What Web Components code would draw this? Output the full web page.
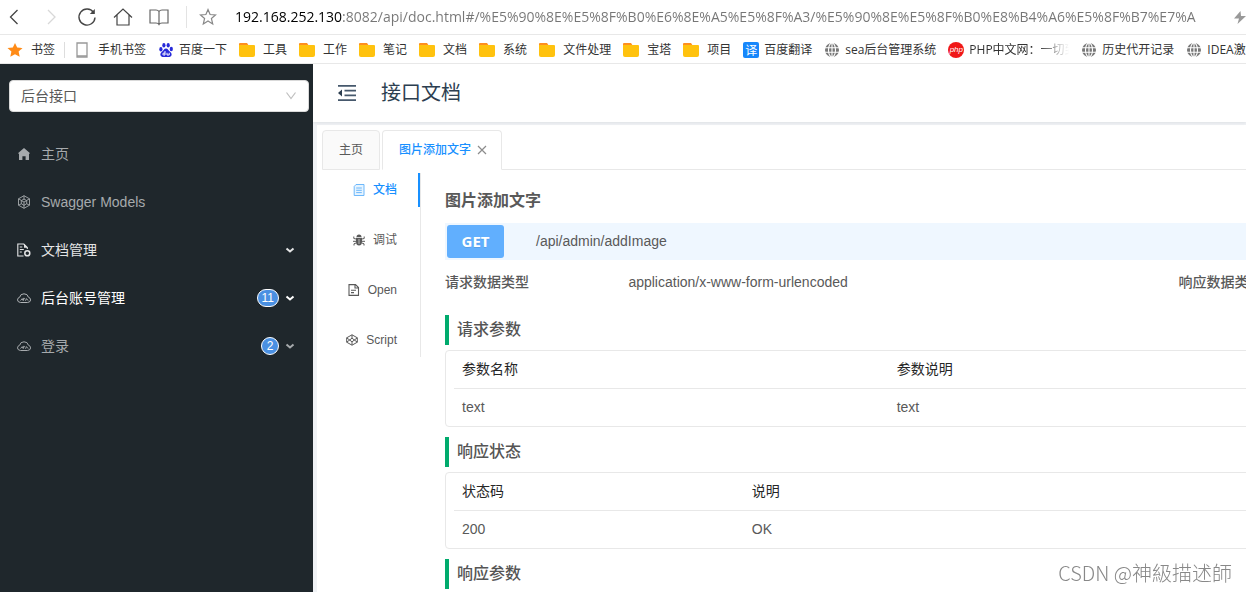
<!DOCTYPE html>
<html lang="zh-CN">
<head>
<meta charset="utf-8">
<title>接口文档</title>
<style>
  body {
    margin: 0;
    font: 14px/22px "Liberation Sans", "Noto Sans CJK SC", sans-serif;
    color: #595959;
    background: #fff;
  }
</style>
</head>
<body>
<api-app></api-app>

<script>
const ICONS = {
  back: ['0 0 20 20', '<path d="M12.500 3 5.500 10l7 7" fill="none" stroke="#444" stroke-width="1.300"/>'],
  forward: ['0 0 20 20', '<path d="m7 3 7 7-7 7" fill="none" stroke="#d8d8d8" stroke-width="1.300"/>'],
  reload: ['0 0 20 20', '<path d="M16.600 5.500A8 8 0 1 0 18 10.500" fill="none" stroke="#444" stroke-width="1.400"/><path d="M17.800 2v5h-5z" fill="#444"/>'],
  house: ['0 0 20 20', '<path d="M1 10.500 10 2l9 8.500M4 8v10h12V8" fill="none" stroke="#444" stroke-width="1.200"/>'],
  book: ['0 0 20 20', '<path d="M10 4.500C9 3 8 3 7 3H1v13h6c1.500 0 2.500.5 3 1.500.5-1 1.500-1.500 3-1.500h6V3h-6c-1 0-2 0-3 1.500zv13" fill="none" stroke="#666" stroke-width="1.200"/>'],
  fav: ['0 0 20 20', '<path d="m10 2.500 2.100 5 5.400.5-4.100 3.500 1.300 5.400L10 14l-4.700 2.900 1.300-5.400L2.500 8l5.400-.5z" fill="none" stroke="#888" stroke-width="1.200"/>'],
  bolt: ['0 0 16 16', '<path d="M8.500 2 2 9.500h5L5.500 15 14 7H9z" fill="#999"/>'],
  star: ['0 0 16 16', '<path d="m8 1 2.200 4.500 5.300.6-3.900 3.500 1.100 5.100L8 12.200l-4.700 2.500 1.100-5.100L.5 6.100l5.300-.6z" fill="#ff8b17"/>'],
  phone: ['0 0 16 16', '<path d="M3 1h10v14H3z" fill="#fff" stroke="#999" stroke-width="1.300"/><path d="M3 14h10" stroke="#999" stroke-width="1.500"/>'],
  baidu: ['0 0 16 16', '<g fill="#2629d9"><ellipse cx="2.900" cy="7.200" rx="1.600" ry="2.200"/><ellipse cx="5.900" cy="3.300" rx="1.600" ry="2.300"/><ellipse cx="10.200" cy="3.300" rx="1.600" ry="2.300"/><ellipse cx="13.300" cy="7" rx="1.600" ry="2.200"/><path d="M8 6.500c2 0 2.500 2 4 3.300 1.700 1.500 2 2.700 1.300 4-.8 1.500-2.800 1.300-5.300 1.100-2.500.2-4.500.4-5.300-1.100-.7-1.300-.4-2.500 1.300-4C5.500 8.500 6 6.500 8 6.500z"/></g><path d="M7 9v4H5.300q-1-.9 0-1.900H7M9 10.800V13h2.200v-2.200" fill="none" stroke="#fff"/>'],
  folder: ['0 0 16 16', '<path d="M0 2q0-1 1-1h7l2 3v3H0z" fill="#ff8f1f"/><path d="M0 3h15q1 0 1 1v9q0 2-2 2H2q-2 0-2-2z" fill="#ffc20e"/>'],
  globe: ['0 0 16 16', '<circle cx="8" cy="8" r="7" fill="#777"/><g fill="none" stroke="#fff" stroke-width="1.100"><ellipse cx="8" cy="8" rx="3.500" ry="7"/><path d="M8 1v14M1 5.700h14M1 10.300h14"/></g>'],
  home: ['0 0 14 14', '<path d="M7 1 12.800 6q.3.800-.6.800H12V13H8.600V9.300H5.400V13H2V6.800h-.2Q.9 6.800 1.200 6z" fill="currentColor"/>'],
  model: ['0 0 14 14', '<g fill="none" stroke="currentColor" stroke-width=".9"><path d="M7 .7 12.500 3.800v6.400L7 13.300 1.500 10.200V3.800zM7 .7v3.800M1.500 3.800 4.500 5.500M12.500 3.800 9.500 5.500M7 13.300V10M1.500 10.200l3-1.500M12.500 10.200l-3-1.500"/><path d="m7 4 2.700 1.600v3.100L7 10.300 4.300 8.700V5.600zM4.300 5.600 7 7l2.700-1.400M7 7v3.300"/></g>'],
  docset: ['0 0 14 14', '<path d="M6.500 13H.8V1h6l3.500 3.500V6M2.800 4h2.500M2.800 6.500h4M2.800 9h2" fill="none" stroke="currentColor" stroke-width="1.100"/><path d="M7 1v3.700h3.500z" fill="currentColor"/><circle cx="10.300" cy="10.300" r="2.500" fill="none" stroke="currentColor" stroke-width="1.500"/>'],
  cloud: ['0 0 14 14', '<path d="M3.500 11.500Q.5 11.100.5 8.900q0-2 2.200-2.700Q3.300 2.800 7 2.800q3.700 0 4.400 3.400 2.200.7 2.200 2.700 0 2.200-3 2.600z" fill="none" stroke="currentColor"/><path d="m3.500 9.600 1.700-2 .8 2M6.500 9.600V7.300q1.700-.2 1.300 1M8.500 9.800l1-2.200 1.600 2" fill="none" stroke="currentColor" stroke-width=".9"/>'],
  chevron: ['0 0 10 10', '<path d="m1.500 3.500 3.500 3 3.500-3" fill="none" stroke="currentColor" stroke-width="2"/>'],
  arrow: ['0 0 12 12', '<path d="m1.500 2.500 4.500 6 4.500-6" fill="none" stroke="#bfbfbf" stroke-width="1.200"/>'],
  fold: ['0 0 20 20', '<path d="M1 2.800h18M7.500 7.700H19M7.500 12.300H19M1 17.200h18" stroke="#46586c" stroke-width="1.700"/><path d="M5 6.500v7L1 10z" fill="#2c3e50"/>'],
  close: ['0 0 10 10', '<path d="m1 1 8 8M9 1 1 9" fill="none" stroke="#8c8c8c" stroke-width="1.200"/>'],
  file: ['0 0 12 12', '<path d="M3 .5h8v11H1.200V2.500zM3.200 4h5.600M3.200 6.300h5.600M3.200 8.600h5.600" fill="#e6f4ff" stroke="#5fb0fb" stroke-width=".9"/>'],
  bug: ['0 0 12 12', '<path d="M3.500 3q0-2.500 2.500-2.500T8.500 3zM3 3.700h6v4q0 3.800-3 3.800t-3-3.800z" fill="currentColor"/><path d="M.8 2.500v2L3 5M11.200 2.500v2L9 5M0 7.300h12M1 11.500V9.800L3 9M11 11.500V9.800L9 9" fill="none" stroke="currentColor"/><path d="M6 5v5" stroke="#fff" stroke-width=".6"/>'],
  page: ['0 0 12 12', '<path d="M1 .6h6.500l3 3v7.800H1zM7 .6V4h3.500M3 6.300h5M3 8.600h3" fill="none" stroke="currentColor" stroke-width="1.100"/>'],
  pen: ['0 0 12 12', '<path d="m6 .8 5.300 3v4.400l-5.300 3-5.300-3V3.800zM6 .8v3.400M6 7.800v3.400M.7 3.800 6 7.800l5.300-4M.7 8.200 6 4.200l5.300 4" fill="none" stroke="currentColor"/>']
};

const define = (name, markup, setup) => {
  const template = document.createElement('template');
  template.innerHTML = markup;
  customElements.define(name, class extends HTMLElement {
    constructor() {
      super();
      this.attachShadow({ mode: 'open' }).append(template.content.cloneNode(true));
    }
    connectedCallback() {
      if (setup) setup(this, this.shadowRoot);
    }
  });
};

const makeIcon = (name, className = '') => {
  const icon = document.createElement('ui-icon');
  icon.setAttribute('name', name);
  icon.className = className;
  return icon;
};

/* A square icon; its side is set by --size. */
define('ui-icon', `
  <style>
    :host { display: block; flex: none; width: var(--size, 16px); height: var(--size, 16px); }
    svg { display: block; width: 100%; height: 100%; }
  </style>
  <svg aria-hidden="true"></svg>`, (el, root) => {
  const [box, body] = ICONS[el.getAttribute('name')];
  const svg = root.querySelector('svg');
  svg.setAttribute('viewBox', box);
  svg.innerHTML = body;
});

define('address-bar', `
  <style>
    :host { display: flex; align-items: center; height: 34px; padding-left: 5px; border-bottom: 1px solid #e8e8e8; overflow: hidden; }
    button { flex: none; padding: 0; margin-right: 16px; border: 0; background: none; --size: 20px; }
    .rule { flex: none; width: 1px; height: 22px; margin: 0 11px 0 1px; background: #e3e3e3; }
    .fav { margin-right: 17px; }
    input {
      flex: 1; min-width: 0; padding: 0; border: 0; outline: 0; height: 24px;
      font: 14px/24px "Open Sans", sans-serif;
      color: transparent;
      background: linear-gradient(90deg, #000 107px, #767676 107px);
      -webkit-background-clip: text; background-clip: text;
    }
    .go { margin: 0 0 0 16px; --size: 16px; width: 14px; overflow: hidden; }
  </style>
  <button aria-label="后退"><ui-icon name="back"></ui-icon></button>
  <button aria-label="前进"><ui-icon name="forward"></ui-icon></button>
  <button aria-label="刷新"><ui-icon name="reload"></ui-icon></button>
  <button aria-label="首页"><ui-icon name="house"></ui-icon></button>
  <button aria-label="阅读"><ui-icon name="book"></ui-icon></button>
  <span class="rule"></span>
  <button class="fav" aria-label="收藏"><ui-icon name="fav"></ui-icon></button>
  <input aria-label="地址" value="192.168.252.130:8082/api/doc.html#/%E5%90%8E%E5%8F%B0%E6%8E%A5%E5%8F%A3/%E5%90%8E%E5%8F%B0%E8%B4%A6%E5%8F%B7%E7%A">
  <button class="go" aria-label="加速"><ui-icon name="bolt"></ui-icon></button>`);

define('book-mark', `
  <style>
    :host { display: block; flex: none; margin-right: 12px; }
    a { display: flex; align-items: center; gap: 5px; color: #333; text-decoration: none; white-space: nowrap; }
    :host([icon="folder"]) a, :host([icon="star"]) a, :host([icon="phone"]) a { gap: 8px; }
    :host([fade]) span { width: 100px; overflow: hidden; -webkit-mask: linear-gradient(90deg, #000 70px, transparent); mask: linear-gradient(90deg, #000 70px, transparent); }
    b { width: 16px; height: 16px; text-align: center; font: 12px/16px "Noto Sans CJK SC", sans-serif; color: #fff; background: #1787fb; border-radius: 2px; }
    b.php { border-radius: 8px; background: #f01818; font: italic 8px/16px "Liberation Sans", sans-serif; }
  </style>
  <a href="#"><span><slot></slot></span></a>`, (el, root) => {
  const name = el.getAttribute('icon');
  const badge = { fanyi: '译', php: 'php' }[name];
  let mark = null;
  if (badge) {
    mark = document.createElement('b');
    mark.textContent = badge;
    mark.className = name;
  } else {
    mark = makeIcon(name);
  }
  root.querySelector('a').prepend(mark);
});

define('bookmark-bar', `
  <style>
    :host { display: flex; align-items: center; height: 27px; padding: 1px 0 0 7px; border-bottom: 1px solid #e8e8e8; overflow: hidden;
            font: 12px/20px "Open Sans", "Noto Sans CJK SC", sans-serif; }
    i { flex: none; width: 1px; height: 16px; margin: 0 9px 0 -3px; background: #ddd; }
  </style>
  <book-mark icon="star">书签</book-mark><i></i>
  <book-mark icon="phone">手机书签</book-mark>
  <book-mark icon="baidu">百度一下</book-mark>
  <book-mark icon="folder">工具</book-mark>
  <book-mark icon="folder">工作</book-mark>
  <book-mark icon="folder">笔记</book-mark>
  <book-mark icon="folder">文档</book-mark>
  <book-mark icon="folder">系统</book-mark>
  <book-mark icon="folder">文件处理</book-mark>
  <book-mark icon="folder">宝塔</book-mark>
  <book-mark icon="folder">项目</book-mark>
  <book-mark icon="fanyi">百度翻译</book-mark>
  <book-mark icon="globe">sea后台管理系统</book-mark>
  <book-mark icon="php" fade>PHP中文网：一切到</book-mark>
  <book-mark icon="globe">历史代开记录</book-mark>
  <book-mark icon="globe">IDEA激</book-mark>`);

define('menu-item', `
  <style>
    :host { display: block; color: #a6aaad; }
    :host([tone="light"]) { color: #e4e5e6; }
    :host([tone="active"]) { color: #fff; }
    a { display: flex; align-items: center; height: 48px; padding: 0 18px 0 17px; color: inherit; text-decoration: none; }
    .icon { --size: 14px; margin-right: 10px; }
    :host([tone="active"]) .icon { color: #b0b4b7; }
    .text { flex: 1; }
    .count { min-width: 8px; padding: 0 4px; border: 1px solid #fff; border-radius: 9px; margin-right: 6px;
             background: #4a90e2; color: #fff; font-size: 12px; line-height: 16px; text-align: center; }
    .open { --size: 10px; }
  </style>
  <a href="#"><span class="text"><slot></slot></span></a>`, (el, root) => {
  const link = root.querySelector('a');
  link.prepend(makeIcon(el.getAttribute('icon'), 'icon'));
  if (el.hasAttribute('count')) {
    const count = document.createElement('span');
    count.className = 'count';
    count.textContent = el.getAttribute('count');
    link.append(count);
  }
  if (el.hasAttribute('group')) link.append(makeIcon('chevron', 'open'));
});

define('side-bar', `
  <style>
    :host { display: block; flex: none; width: 313px; background: #1f272c; }
    label { display: grid; align-items: center; margin: 16px 4px 18px 9px; }
    select, label ui-icon { grid-area: 1 / 1; }
    select { appearance: none; width: 100%; height: 32px; padding: 0 11px; border: 1px solid #d9d9d9; border-radius: 4px;
             background: #fff; color: #595959; font: inherit; }
    label ui-icon { --size: 12px; justify-self: end; margin-right: 12px; pointer-events: none; }
  </style>
  <label><select aria-label="接口分组"><option>后台接口</option></select><ui-icon name="arrow"></ui-icon></label>
  <nav>
    <menu-item icon="home">主页</menu-item>
    <menu-item icon="model">Swagger Models</menu-item>
    <menu-item icon="docset" tone="light" group>文档管理</menu-item>
    <menu-item icon="cloud" tone="active" count="11" group>后台账号管理</menu-item>
    <menu-item icon="cloud" count="2" group>登录</menu-item>
  </nav>`);

define('top-header', `
  <style>
    :host { display: flex; align-items: center; height: 58px; background: #fff; box-shadow: 0 1px 3px rgba(0, 21, 41, .08); position: relative; }
    button { padding: 0; margin: 0 24px; border: 0; background: none; --size: 20px; }
    h1 { margin: 0; font-size: 20px; line-height: 28px; font-weight: 400; color: #2c3e50; }
  </style>
  <button aria-label="收起菜单"><ui-icon name="fold"></ui-icon></button>
  <h1>接口文档</h1>`);

define('page-tabs', `
  <style>
    :host { display: flex; gap: 2px; padding-left: 5px; font-size: 12px; }
    :host::after { content: ""; flex: 1; margin-left: -2px; border-bottom: 1px solid #e8e8e8; }
    button { display: flex; align-items: center; gap: 6px; height: 40px; padding: 0 16px; border: 1px solid #e8e8e8; border-radius: 4px 4px 0 0;
             background: #fafafa; color: #595959; font: inherit; }
    .on { padding-right: 14px; background: #fff; border-bottom-color: #fff; color: #1890ff; font-weight: 500; }
    ui-icon { --size: 10px; }
  </style>
  <button>主页</button>
  <button class="on">图片添加文字<ui-icon name="close"></ui-icon></button>`);

define('side-tabs', `
  <style>
    :host { display: flex; flex-direction: column; gap: 16px; flex: none; align-self: flex-start; width: 103px; border-right: 1px solid #e8e8e8; font-size: 12px; }
    button { display: flex; align-items: center; justify-content: flex-end; gap: 8px; height: 34px; padding: 0 21px 0 0; border: 0; border-right: 2px solid transparent;
             background: none; color: #595959; font: inherit; --size: 12px; }
    .on { color: #1890ff; border-right-color: #1890ff; font-weight: 500; }
  </style>
  <button class="on"><ui-icon name="file"></ui-icon>文档</button>
  <button><ui-icon name="bug"></ui-icon>调试</button>
  <button><ui-icon name="page"></ui-icon>Open</button>
  <button><ui-icon name="pen"></ui-icon>Script</button>`);

define('doc-section', `
  <style>
    :host { display: block; margin-bottom: 10px; }
    h3 { margin: 0 0 5px; padding-left: 8px; border-left: 4px solid #00ab6d; font-size: 16px; line-height: 30px; font-weight: 500; color: #555; }
  </style>
  <h3></h3>
  <slot></slot>`, (el, root) => {
  root.querySelector('h3').textContent = el.getAttribute('heading');
});

/* Rows are split by ";" and cells by ","; the first row is the head. */
define('data-table', `
  <style>
    :host { display: block; padding: 0 8px; border: 1px solid #e8e8e8; border-radius: 4px; }
    table { width: 100%; border-spacing: 0; table-layout: fixed; }
    th, td { box-sizing: border-box; height: 37px; padding: 0 8px 2px; text-align: left; font-weight: 400; }
    th { height: 38px; border-bottom: 1px solid #e8e8e8; color: #262626; }
    th:first-child { width: var(--first); }
  </style>
  <table><thead></thead><tbody></tbody></table>`, (el, root) => {
  el.getAttribute('rows').split(';').forEach((line, index) => {
    const row = root.querySelector(index ? 'tbody' : 'thead').insertRow();
    line.split(',').forEach(text => {
      const cell = document.createElement(index ? 'td' : 'th');
      if (!index) cell.scope = 'col';
      cell.textContent = text;
      row.append(cell);
    });
  });
});

define('doc-panel', `
  <style>
    :host { display: block; flex: 1 0 1467px; min-width: 0; padding: 17px 24px 0; box-sizing: content-box; }
    h2 { margin: 0 0 11px; font-size: 16px; line-height: 22px; font-weight: 700; color: #595959; }
    .request { display: flex; align-items: center; gap: 32px; padding: 2px; background: #eff7ff; line-height: 20px; }
    .request span { padding-bottom: 2px; }
    .request b { width: 57px; border-radius: 3px; background: #61affe; color: #fff; text-align: center;
                 font: 700 15px/33px "Open Sans", sans-serif; text-shadow: 0 1px 0 rgba(0, 0, 0, .1); }
    dl { display: grid; grid-template-columns: 1fr 3fr 1fr 3fr; margin: 11px 0 22px; }
    dt { font-weight: 500; }
    dd { margin: 0; }
    .params { --first: 30%; }
    .status { --first: 20%; }
  </style>
  <h2>图片添加文字</h2>
  <div class="request"><b>GET</b><span>/api/admin/addImage</span></div>
  <dl><dt>请求数据类型</dt><dd>application/x-www-form-urlencoded</dd><dt>响应数据类型</dt></dl>
  <doc-section heading="请求参数"><data-table class="params" rows="参数名称,参数说明;text,text"></data-table></doc-section>
  <doc-section heading="响应状态"><data-table class="status" rows="状态码,说明;200,OK"></data-table></doc-section>
  <doc-section heading="响应参数"></doc-section>`);

define('water-mark', `
  <style>
    :host { position: fixed; right: 14px; bottom: 5px; font: 300 20px/28px "Noto Sans CJK TC", sans-serif;
            color: #888; text-shadow: -1px -1px 0 #fff; }
  </style>
  <slot></slot>`);

define('api-app', `
  <style>
    :host { display: flex; flex-direction: column; height: 100vh; overflow: hidden; }
    .app { display: flex; flex: 1; min-height: 0; }
    main { flex: 1; min-width: 0; overflow: hidden; background: #f0f2f5; }
    .sheet { margin: 3px 0 0 4px; padding-top: 5px; min-height: 100%; background: #fff; }
    .body { display: flex; padding-top: 3px; }
  </style>
  <address-bar></address-bar>
  <bookmark-bar></bookmark-bar>
  <div class="app">
    <side-bar></side-bar>
    <main>
      <top-header></top-header>
      <div class="sheet">
        <page-tabs></page-tabs>
        <div class="body">
          <side-tabs></side-tabs>
          <doc-panel></doc-panel>
        </div>
      </div>
    </main>
  </div>
  <water-mark>CSDN @神級描述師</water-mark>`);
</script>
</body>
</html>
